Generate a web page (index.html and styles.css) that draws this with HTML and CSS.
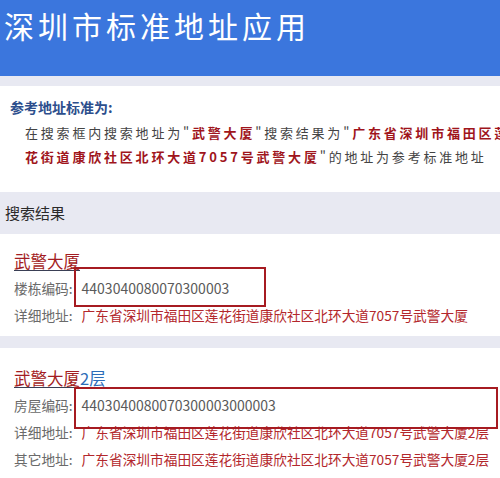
FILE: index.html
```html
<!DOCTYPE html>
<html lang="zh-CN">
<head>
<meta charset="utf-8">
<title>深圳市标准地址应用</title>
<link rel="stylesheet" href="styles.css">
</head>
<body>
<div class="page">
  <header class="header">
    <h1 class="title">深圳市标准地址应用</h1>
  </header>
  <section class="card ref">
    <h2 class="ref-head">参考地址标准为:</h2>
    <div class="ref-text">
      <div class="ref-line">在搜索框内搜索地址为"<b>武警大厦</b>"搜索结果为"<b>广东省深圳市福田区莲</b></div>
      <div class="ref-line"><b>花街道康欣社区北环大道7057号武警大厦</b>"的地址为参考标准地址</div>
    </div>
  </section>
  <div class="section-title">搜索结果</div>
  <section class="card result first">
    <a class="name" href="#">武警大厦</a>
    <div class="row"><span class="label">楼栋编码:</span><span class="code">4403040080070300003</span></div>
    <div class="row"><span class="label">详细地址:</span><span class="addr">广东省深圳市福田区莲花街道康欣社区北环大道7057号武警大厦</span></div>
  </section>
  <section class="card result second">
    <a class="name" href="#">武警大厦<span class="hl">2层</span></a>
    <div class="row"><span class="label">房屋编码:</span><span class="code">4403040080070300003000003</span></div>
    <div class="row"><span class="label">详细地址:</span><span class="addr">广东省深圳市福田区莲花街道康欣社区北环大道7057号武警大厦2层</span></div>
    <div class="row"><span class="label">其它地址:</span><span class="addr">广东省深圳市福田区莲花街道康欣社区北环大道7057号武警大厦2层</span></div>
  </section>
  <div class="mark mark-one"></div>
  <div class="mark mark-two"></div>
</div>
</body>
</html>
```
FILE: styles.css
```css
html, body {
  margin: 0;
  padding: 0;
}
body {
  background: #e8e9f2;
  font-family: "Noto Sans CJK SC", "Noto Sans", sans-serif;
  overflow: hidden;
}
.page {
  position: relative;
  width: 500px;
  height: 478px;
  overflow: hidden;
}
.header {
  background: #3b76dd;
  height: 76px;
  margin-bottom: 10px;
}
.title {
  margin: 0;
  padding: 6px 0 0 4px;
  font-size: 30px;
  line-height: 38px;
  font-weight: normal;
  letter-spacing: 4px;
  color: #ffffff;
}
.card {
  background: #ffffff;
}
.ref {
  height: 106px;
  box-sizing: border-box;
  padding-top: 10px;
}
.ref-head {
  margin: 0 0 3px 10px;
  font-size: 14px;
  line-height: 22px;
  font-weight: bold;
  color: #2c4e8c;
}
.ref-text {
  padding-left: 25px;
  font-size: 13px;
  line-height: 24px;
  letter-spacing: 2.8px;
  color: #444444;
}
.ref-line {
  white-space: nowrap;
}
.ref-line b {
  color: #a0151c;
  font-weight: bold;
}
.section-title {
  height: 42px;
  box-sizing: border-box;
  padding: 9px 0 0 5px;
  font-size: 15px;
  line-height: 24px;
  color: #2a2a2a;
}
.result {
  padding-left: 14px;
  box-sizing: border-box;
}
.first {
  height: 102px;
  padding-top: 13px;
  margin-bottom: 12px;
}
.second {
  height: 200px;
  padding-top: 16px;
}
.name {
  display: block;
  width: max-content;
  font-size: 16.5px;
  line-height: 28px;
  color: #a31c22;
  text-decoration: underline;
  text-decoration-color: #3a3f55;
  text-underline-offset: 2px;
}
.hl {
  color: #2d6db8;
}
.row {
  display: flex;
  align-items: baseline;
  font-size: 13.7px;
  line-height: 27px;
  white-space: nowrap;
}
.label {
  color: #6a6a6a;
  margin-right: 9px;
}
.code {
  font-size: 14px;
  color: #5a5a5a;
}
.addr {
  color: #b3272c;
}
.mark {
  position: absolute;
  border: 2px solid #a61b21;
  box-sizing: border-box;
}
.mark-one {
  left: 74px;
  top: 267px;
  width: 192px;
  height: 40px;
}
.mark-two {
  left: 74px;
  top: 387px;
  width: 424px;
  height: 42px;
}
```
